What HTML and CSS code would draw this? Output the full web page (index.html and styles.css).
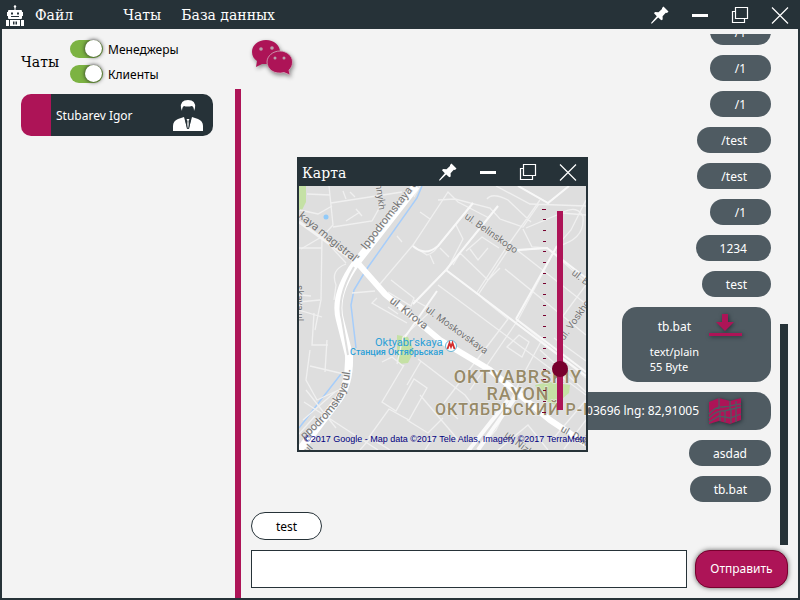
FILE: index.html
```html
<!DOCTYPE html>
<html lang="ru">
<head>
<meta charset="utf-8">
<meta name="viewport" content="width=device-width, initial-scale=1">
<title>Чаты</title>
<link rel="stylesheet" href="styles.css">
</head>
<body>
<svg class="defs" aria-hidden="true">
  <symbol id="pin" viewBox="0 0 18 18">
    <path fill="#fff" d="M12.500 0.500 L17.500 5.500 L16 7 L14.800 6.800 L11.600 10.200 L11.700 13.500 L10.300 14.300 L7.200 11.400 L1 17.500 L0 17.500 L0.400 16.500 L5.800 10.200 L3 7.300 L4 6 L7.500 6.200 L11 3 L11 2 Z"/>
  </symbol>
  <symbol id="min" viewBox="0 0 18 18"><path fill="#fff" d="M1 8h16v3H1z"/></symbol>
  <symbol id="restore" viewBox="0 0 18 18">
    <path fill="none" stroke="#fff" stroke-width="1.200" d="M4.500 1.500h12v11h-12z M4 5.500H1.500v11h12V13"/>
  </symbol>
  <symbol id="close" viewBox="0 0 18 18"><path fill="none" stroke="#fff" stroke-width="1.200" d="M1 1.500l16 16M17 1.500l-16 16"/></symbol>
</svg>

<div class="window">
  <header class="titlebar">
    <svg class="robot" viewBox="0 0 20 24" aria-hidden="true">
      <path fill="#fff" d="M9.500 3h1v4h-1z M4 6h12q1 0 1 1v1h1v4h-1v2q0 1-1 1H4q-1 0-1-1v-2H2V8h1V7q0-1 1-1z M1 16h3v6H1z M16 16h3v6h-3z M5 16h10v6H5z"/>
      <circle cx="10" cy="2.500" r="1.200" fill="#fff"/>
      <path fill="#263238" d="M6 8.500h2v2H6z M12 8.500h2v2h-2z M6 12h8v1H6z M8 17.500h1.500v3H8z M10.500 17.500H12v3h-1.500z"/>
    </svg>
    <nav class="menu">
      <button class="menu-item menu-file">Файл</button>
      <button class="menu-item">Чаты</button>
      <button class="menu-item">База данных</button>
    </nav>
    <div class="controls">
      <button aria-label="Закрепить"><svg><use href="#pin"/></svg></button>
      <button aria-label="Свернуть"><svg><use href="#min"/></svg></button>
      <button aria-label="Развернуть"><svg><use href="#restore"/></svg></button>
      <button aria-label="Закрыть"><svg><use href="#close"/></svg></button>
    </div>
  </header>

  <div class="content">
    <aside class="sidebar">
      <div class="filters">
        <h1 class="heading">Чаты</h1>
        <div class="toggles">
          <label class="toggle"><input type="checkbox" checked><span>Менеджеры</span></label>
          <label class="toggle"><input type="checkbox" checked><span>Клиенты</span></label>
        </div>
      </div>
      <button class="contact">
        <span class="contact-name">Stubarev Igor</span>
        <svg class="person" viewBox="0 0 32 34" aria-hidden="true">
          <path fill="#fff" d="M9 9 Q8 1 16 1 Q24 1 23 9 L22 12 Q22 8 20 7 Q15 8 12 7 Q10 8 10 12 Z"/>
          <path fill="#fff" d="M1 32 V27 Q1 22 6 20 L12 18 L15 29 L15.500 22 L14.500 20 H17.500 L16.500 22 L17 29 L20 18 L26 20 Q31 22 31 27 V32 Z"/>
          <path fill="none" stroke="#263238" d="M13.500 20 L15.500 30 M18.500 20 L16.500 30"/>
        </svg>
      </button>
    </aside>
    <div class="divider"></div>

    <main class="chat">
      <svg class="bubbles" viewBox="0 0 44 40" aria-hidden="true">
        <path fill="#ad1457" d="M15 1 C23 1 29 6 29 13 C29 20 23 25 15 25 L11 25 L5 28 L6 22 C3 20 1 17 1 13 C1 6 7 1 15 1z"/>
        <path fill="#ad1457" stroke="#d0b0be" stroke-width="0.800" d="M29 12 C36 12 41.500 17 41.500 23 C41.500 27 40 29 38 31 L39 36 L33 33.500 C23 36 16 30 16 23 C16 17 22 12 29 12z"/>
        <g fill="#b9a0ac"><circle cx="10" cy="10" r="1.800"/><circle cx="21" cy="9" r="1.800"/><circle cx="24" cy="19" r="1.500"/><circle cx="33" cy="19" r="1.500"/></g>
      </svg>
      <div class="history">
        <div class="messages">
          <div class="msg">/1</div>
          <div class="msg">/1</div>
          <div class="msg">/1</div>
          <div class="msg">/test</div>
          <div class="msg">/test</div>
          <div class="msg">/1</div>
          <div class="msg">1234</div>
          <div class="msg">test</div>
          <div class="msg file">
            <span class="file-name">tb.bat</span>
            <button class="icon-button" aria-label="Скачать">
              <svg viewBox="0 0 36 26"><path fill="#ad1457" d="M15 1h6v8h6l-9 9-9-9h6z M2 20h33v3H2z"/></svg>
            </button>
            <span class="file-info">text/plain<br>55 Byte</span>
          </div>
          <div class="msg place">
            <span>lat: 55,03696 lng: 82,91005</span>
            <button class="icon-button" aria-label="Карта">
              <svg viewBox="0 0 36 28">
                <path fill="#ad1457" d="M2 5 L12 1 L23 4 L34 1 V23 L23 27 L12 24 L2 27 Z"/>
                <path fill="none" stroke="#4f5b62" stroke-width="1.300" d="M12 1V12 M23 4V12 M2 17 Q9 9 16 10 L34 7 M2 21 Q10 13 17 14 L34 10 M13 15V24 M18 14V25 M24 13V26 M29 4V25 M2 25L12 19L23 21L34 17"/>
              </svg>
            </button>
          </div>
          <div class="msg">asdad</div>
          <div class="msg">tb.bat</div>
          <div class="msg incoming">test</div>
        </div>
        <div class="scrollbar"><div class="thumb"></div></div>
      </div>
      <form class="composer">
        <input type="text" aria-label="Сообщение">
        <button type="button">Отправить</button>
      </form>
    </main>
  </div>

  <section class="map-window" aria-label="Карта">
    <header class="titlebar">
      <h2 class="map-title">Карта</h2>
      <div class="controls">
        <button aria-label="Закрепить"><svg><use href="#pin"/></svg></button>
        <button aria-label="Свернуть"><svg><use href="#min"/></svg></button>
        <button aria-label="Развернуть"><svg><use href="#restore"/></svg></button>
        <button aria-label="Закрыть"><svg><use href="#close"/></svg></button>
      </div>
    </header>
    <div class="map">
      <svg class="map-view" viewBox="299 186 287 264">
        <defs><path id="ippodromskaya" d="M304 440 Q342 408 348 384 Q352 366 351 345"/></defs>
        <path fill="#dedede" d="M299 186h287v264H299z"/>
        <path fill="#c5e1a5" d="M299 186h7v16l-4 8h-3z M397 335l11 2 6 14-6 12-9 1-2-10z M535 385l14-3 21 3-1 8-14 12-14-6z"/>
        <circle cx="326" cy="217" r="2.500" fill="#90caf9"/>
        <!-- rivers -->
        <path class="river" d="M422 186 L417 198 L366 270 L354 290 L351 305 L356 348 M341 374 L299 428"/>
        <!-- minor streets -->
        <g class="minor">
          <path d="M329 186 L333 225 L323 236 L301 249 M331 203 L402 192 M333 227 L372 221 L381 205 L380 186 M307 194 L330 195 M300 210 L318 214 L332 206 M343 191 L346 199 M350 192 L355 197 M346 221 L360 212 M362 216 L356 209"/>
          <path d="M322 237 L321 300 L315 330 M299 248 L322 248 M320 300 L299 302 M323 238 L346 263 M346 264 Q330 270 336 285 L334 300 M301 295 L311 296 M314 313 L312 345 L328 345 M299 310 L322 317 M310 350 L306 380 L317 400 L343 388 M310 366 L344 374 M327 340 L325 372 M306 390 L336 428 M303 420 L335 392 M304 402 L378 450 M315 416 L299 434"/>
          <path d="M352 293 L375 291 M375 280 L366 275 M380 284 L413 245 L448 192 L458 202 L489 218 M402 242 L397 236 M413 246 L427 255 Q434 253 438 246 L473 203 M440 248 L449 257 M430 255 L434 264 M420 186 L414 197 M420 212 L430 219 M391 280 L414 298 L411 306 L388 292"/>
          <path d="M413 304 L446 270 L498 206 M446 270 L586 376 M476 294 L508 245 L540 200 M478 295 L510 247 M466 251 L482 237 L499 248 M453 265 L460 253 L488 280 L500 268 M438 285 L586 395 M447 270 L463 239 L456 225 M470 249 L478 260 L488 248 M496 186 L530 204 L586 206 M438 200 L455 199 L490 208 L500 219 L523 227 L539 204 M487 199 Q492 192 508 200 L531 222 M518 186 L548 203 L569 186 M523 229 L532 247 L547 248 L586 282 M526 228 L562 213 L586 215 M586 200 L571 230 L557 246 L518 320 L470 390"/>
          <path d="M517 250 L586 304 M505 269 L586 335 M520 250 L544 248 M516 319 L586 378 M544 336 L522 377 L496 430 L478 450 M482 298 L508 319 L466 374 L444 403 M519 335 L529 342 L522 357 L507 347 Z M558 246 Q585 239 583 217 Q578 205 563 212 M540 350 L586 392 M554 338 L586 361 M560 320 L586 285"/>
          <path d="M377 298 L372 303 L407 323 M388 307 L398 314 M414 300 L432 310 L403 337 L397 364 M404 365 L382 402 L396 411 L414 379 L427 388 L409 420 L389 409 L369 437 L390 450 M382 362 L392 357 L403 366 M418 359 L465 395 L480 415 M421 361 L407 385 M420 395 L460 442 M372 436 L360 450 M407 420 L428 433 L443 418 M434 436 L425 450 M441 404 L458 419 M586 400 L552 440 M548 450 L528 425 L498 450 M586 420 L564 449"/>
        </g>
        <g class="street">
          <path d="M413 246 Q425 257 438 246 L473 203 M413 304 L446 270 L498 206 M446 270 L586 376 M518 186 L548 203 L569 186 M516 319 L557 246 M516 319 L586 372 M517 250 L547 248 L586 278 M437 291 L405 337"/>
        </g>
        <path class="street-wide" d="M508 400 L465 455 M478 450 L522 388"/>
        <!-- avenues -->
        <path class="avenue-side" d="M299 222 L358 264"/>
        <path class="avenue" d="M355 260 L385 294 L440 340 L490 370 L550 420 L586 444"/>
        <path class="highway" d="M416 186 L356 263 Q333 295 340 320 L349 355 Q350 383 338 400 L300 450"/>
        <path class="median" d="M354 267 Q336 298 342 320 L348 355"/>
        <!-- labels -->
        <g class="label">
          <text class="large" transform="translate(366 250) rotate(-52)">Ippodromskaya ul.</text>
          <text class="large" transform="translate(298 217) rotate(39)">kaya magistral'</text>
          <text transform="translate(375 181) rotate(82)">mnykh</text>
          <text transform="translate(464 218) rotate(35)">ul. Belinskogo</text>
          <text class="large" transform="translate(389 302) rotate(38)">ul. Kirova</text>
          <text transform="translate(425 311) rotate(36)">ul. Moskovskaya</text>
          <text class="large"><textPath href="#ippodromskaya">ppodromskaya ul.</textPath></text>
          <text transform="translate(571 274) rotate(38)">ul. Belinskogo</text>
          <text transform="translate(564 341) rotate(-55)">ul. Voskhod</text>
          <text transform="translate(504 436) rotate(38)">ul. Nizhegorodskaya</text>
          <text transform="translate(560 431) rotate(30)">ul. Dek</text>
          <text transform="translate(308 454) rotate(-48)">ul</text>
          <text transform="translate(296 285) rotate(90)">skaya ul</text>
        </g>
        <g class="station">
          <text x="375" y="346" class="station-name">Oktyabr'skaya</text>
          <text x="350" y="355" class="station-local">Станция Октябрьская</text>
          <circle cx="451" cy="346" r="5.500" fill="#fff" stroke="#64b5d6"/>
          <path fill="none" stroke="#d32f2f" stroke-width="1.800" d="M447.500 349 L449.500 343 L451 347 L452.500 343 L454.500 349"/>
        </g>
        <g class="district">
          <text x="518" y="383" text-anchor="middle">OKTYABRSKIY</text>
          <text x="518" y="400" text-anchor="middle">RAYON</text>
          <text x="435" y="415" class="district-local">ОКТЯБРЬСКИЙ Р-Н</text>
        </g>
        <path class="ticks" d="M542 209.500h4 M543 219.500h3 M543 230.500h3 M543 241.500h3 M543 251.500h3 M543 262.500h3 M543 273.500h3 M543 283.500h3 M543 294.500h3 M543 305.500h3 M543 315.500h3 M543 326.500h3 M543 337.500h3 M543 348.500h3 M543 358.500h3 M543 369.500h3 M543 379.500h3 M543 390.500h3 M543 401.500h3 M542 412.500h4"/>
        <text x="304" y="442" class="copyright">©2017 Google - Map data ©2017 Tele Atlas, Imagery ©2017 TerraMetrics</text>
      </svg>
      <input class="zoom" type="range" min="0" max="19" step="0.1" value="3.600" aria-label="Масштаб">
    </div>
  </section>
</div>
</body>
</html>
```

FILE: styles.css
```css
* { box-sizing: border-box; }

body {
  margin: 0;
  font: 12px/16px "Noto Sans", "Open Sans", sans-serif;
  color: #000;
}

button {
  font: inherit;
  color: inherit;
  background: none;
  border: 0;
  padding: 0;
}

svg { display: block; }

.defs { position: absolute; width: 0; height: 0; }

.window {
  position: relative;
  display: flex;
  flex-direction: column;
  height: 100vh;
  border: 2px solid #263238;
  border-top: 0;
  background: #f3f3f3;
  overflow: hidden;
}

.titlebar {
  display: flex;
  align-items: center;
  flex: none;
  height: 29px;
  background: #263238;
  color: #fff;
}

.robot { width: 20px; height: 24px; margin: 2px 0 0 3px; }

.menu {
  display: flex;
  gap: 20px;
  margin-left: 10px;
  font: 14px/20px "DejaVu Serif", serif;
}

.menu-file { margin-right: 30px; }

.controls {
  display: flex;
  gap: 22px;
  margin-left: auto;
  padding-right: 9px;
}

.controls svg { width: 18px; height: 18px; }

.content { display: flex; flex: 1; min-height: 0; }

.sidebar { flex: none; width: 233px; padding: 10px 22px 0 19px; }

.filters { display: flex; align-items: center; gap: 11px; }

.heading { margin: 0; font: 14px/20px "DejaVu Serif", serif; }

.toggles { display: grid; gap: 5px; }

.toggle { display: flex; align-items: center; gap: 5px; height: 20px; }

.toggle span { padding-top: 2px; }

.toggle input {
  appearance: none;
  width: 33px;
  height: 18px;
  margin: 0;
  border-radius: 9px;
  background: #7cb342;
}

.toggle input::before {
  content: "";
  display: block;
  width: 17px;
  height: 17px;
  margin-left: 15px;
  border-radius: 50%;
  background: #fff;
  box-shadow: 0 0 4px #222;
}

.contact {
  display: flex;
  align-items: center;
  justify-content: space-between;
  width: 100%;
  height: 42px;
  margin-top: 10px;
  padding: 1px 9px 0 5px;
  border-left: 30px solid #ad1457;
  border-radius: 10px;
  background: #263238;
  color: #fff;
}

.person { width: 32px; height: 34px; }

.divider { flex: none; width: 6px; margin-top: 60px; background: #ad1457; }

.chat {
  position: relative;
  display: flex;
  flex: 1;
  flex-direction: column;
  min-width: 0;
  padding: 5px 10px 10px;
}

.bubbles {
  position: absolute;
  top: 10px;
  left: 10px;
  width: 44px;
  height: 40px;
  filter: drop-shadow(1px 2px 2px #888);
}

.history { display: flex; flex: 1; gap: 9px; min-height: 0; }

.messages {
  display: flex;
  flex: 1;
  flex-direction: column;
  align-items: flex-end;
  justify-content: flex-end;
  gap: 10px;
  padding-bottom: 5px;
  overflow: hidden;
}

.msg {
  flex: none;
  padding: 6px 24px 4px;
  min-width: 61px;
  border-radius: 15px;
  background: #4f5b62;
  color: #fff;
  text-align: center;
  white-space: nowrap;
}

.incoming {
  align-self: flex-start;
  border: 1px solid #263238;
  background: #fff;
  color: #000;
}

.file {
  display: grid;
  grid-template-columns: auto auto;
  align-items: center;
  gap: 4px 8px;
  height: 75px;
  padding: 5px 28px 8px;
  text-align: left;
}

.file-name { justify-self: center; padding-top: 2px; }

.file-info { font-size: 11px; line-height: 15px; }

.place { display: flex; align-items: center; gap: 8px; height: 38px; padding: 0 28px; }

.icon-button svg { width: 36px; height: 28px; filter: drop-shadow(1px 1px 2px #263238); }

.scrollbar { display: flex; flex: none; align-items: flex-end; width: 8px; }

.thumb { width: 8px; height: 43.2%; background: #263238; }

.composer { display: flex; gap: 8px; flex: none; height: 38px; margin-top: 5px; }

.composer input {
  flex: 1;
  min-width: 0;
  padding: 0 8px;
  border: 1px solid #263238;
  background: #fff;
  font: inherit;
}

.composer button {
  width: 93px;
  border: 1px solid #78002e;
  border-radius: 15px;
  background: #ad1457;
  color: #fff;
  box-shadow: 0 0 5px #666;
}

.map-window {
  position: absolute;
  top: 157px;
  left: 295px;
  width: 291px;
  border: 2px solid #263238;
  border-top: 0;
}

.map-title { margin: 2px 0 0 3px; font: 14px/20px "DejaVu Serif", serif; }

.map { position: relative; overflow: hidden; }

.map-view { width: 100%; height: auto; }

.river { fill: none; stroke: #a6cdfa; stroke-width: 1.5; }

.minor { fill: none; stroke: #f0f0f0; stroke-width: 1.3; }

.street { fill: none; stroke: #f8f8f8; stroke-width: 2; }

.street-wide { fill: none; stroke: #fafafa; stroke-width: 4; }

.avenue-side { fill: none; stroke: #f3f3f3; stroke-width: 3; }

.avenue { fill: none; stroke: #fff; stroke-width: 6; }

.highway { fill: none; stroke: #fff; stroke-width: 8; }

.median { fill: none; stroke: #dedede; stroke-width: 2; }

.label {
  font: 10px Roboto, sans-serif;
  fill: #757575;
  stroke: #e8e8e8;
  stroke-width: 1px;
  paint-order: stroke;
}

.large { font-size: 11px; }

.station { font-family: Roboto, sans-serif; fill: #2b9fd8; }

.station-name { font-size: 11px; }

.station-local { font-size: 9px; font-weight: 500; }

.district {
  font: 500 18px Roboto, sans-serif;
  letter-spacing: 1px;
  fill: #978a68;
  stroke: #eee;
  stroke-width: 1px;
  paint-order: stroke;
}

.district-local { font-size: 16px; }

.ticks { stroke: #78002e; stroke-width: 1; }

.copyright { font: 9px "Liberation Sans", sans-serif; fill: #000080; }

.zoom {
  position: absolute;
  top: 22px;
  right: 18px;
  width: 16px;
  height: 205px;
  margin: 0;
  appearance: none;
  writing-mode: vertical-lr;
  direction: rtl;
  background: linear-gradient(#ad1457, #ad1457) center / 6px 199px no-repeat;
}

.zoom::-webkit-slider-thumb {
  appearance: none;
  width: 16px;
  height: 16px;
  border-radius: 50%;
  background: #78002e;
}
```
